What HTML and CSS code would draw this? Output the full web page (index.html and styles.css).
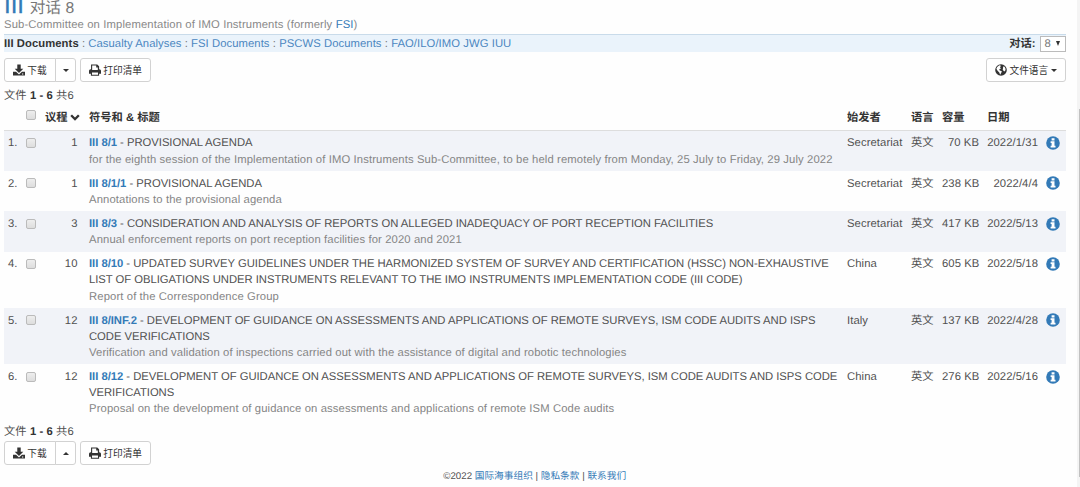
FILE: index.html
```html
<!DOCTYPE html>
<html lang="zh-CN">
<head>
  <meta charset="UTF-8" />
  <meta name="viewport" content="width=device-width, initial-scale=1" />
  <title>III 8</title>
  <link rel="stylesheet" href="styles.css">
</head>
<body>
  <svg class="symbols" width="0" height="0">
    <symbol id="download" viewBox="0 0 14 14">
      <path fill-rule="evenodd" d="M5 .5h4v5h3L7 10.4 2 5.5h3zM0 9h3.6L7 12.2 10.4 9H14v4.5H0zM10.5 11v1.2H12V11z" />
    </symbol>
    <symbol id="print" viewBox="0 0 14 14">
      <path fill-rule="evenodd" d="M2.4.5h7.2l2.2 2.2V6H12q2 0 2 2v3.5h-2.2v2.3H2.2v-2.3H0V8q0-2 2-2h.4zM3.7 1.8V7h6.6V4H8.4V1.8zM3.5 9.8v2.7h7V9.8z" />
    </symbol>
    <symbol id="globe" viewBox="0 0 14 14">
      <circle cx="7" cy="7" r="6.8" />
      <path fill="#fff" d="M2.6 3.5 5 1.6l2 .4L5.8 4l1.4 1L5 6.2l.5 1.3L8 8.6l-.8 2L6 12.4 5 9.8 3 8 1.6 5.6zM9.5 3l1.7.3 1.2 2.5-.5 2-1.2 1L9 6.8l.3-1.5z" />
    </symbol>
    <symbol id="info" viewBox="0 0 14 14">
      <circle cx="7" cy="7" r="6.8" />
      <path fill="#fff" d="M5.6 2.2h2.9v2.2H5.6zM4.6 5.3h3.9v4.5h1v1.7H4.6V9.8h1V7h-1z" />
    </symbol>
    <symbol id="chevron" viewBox="0 0 10 7">
      <path d="M.3 2 2 .5l3 3 3-3L9.7 2 5 6.7z" />
    </symbol>
  </svg>

  <div class="container">
    <h2><a href="#">III</a> <small>对话 8</small></h2>
    <p class="subtitle">Sub-Committee on Implementation of IMO Instruments (formerly <a href="#">FSI</a>)</p>

    <div class="navbar">
      <div class="links"><b>III Documents</b> : <a href="#">Casualty Analyses</a> : <a href="#">FSI Documents</a> : <a href="#">PSCWS Documents</a> : <a href="#">FAO/ILO/IMO JWG IUU</a></div>
      <div class="session"><b>对话:</b> <span class="select">8 <i class="arrow"></i></span></div>
    </div>

    <div class="toolbar">
      <div class="btn-group">
        <button class="btn"><svg><use href="#download" /></svg>下载</button>
        <button class="btn toggle"><i class="caret"></i></button>
      </div>
      <button class="btn"><svg><use href="#print" /></svg>打印清单</button>
      <button class="btn language"><svg><use href="#globe" /></svg>文件语言<i class="caret"></i></button>
    </div>

    <p class="count">文件 <b>1 - 6</b> 共6</p>

    <table>
      <colgroup>
        <col class="c-num"><col class="c-check"><col class="c-agenda"><col><col class="c-author"><col class="c-lang"><col class="c-size"><col class="c-date"><col class="c-info">
      </colgroup>
      <thead>
        <tr>
          <th></th>
          <th><span class="check"></span></th>
          <th>议程 <svg class="sort"><use href="#chevron" /></svg></th>
          <th>符号和 &amp; 标题</th>
          <th>始发者</th>
          <th>语言</th>
          <th>容量</th>
          <th>日期</th>
          <th></th>
        </tr>
      </thead>
      <tbody>
        <tr>
          <td>1.</td>
          <td><span class="check"></span></td>
          <td class="agenda">1</td>
          <td><span class="name"><a href="#">III 8/1</a> - PROVISIONAL AGENDA</span><span class="desc">for the eighth session of the Implementation of IMO Instruments Sub-Committee, to be held remotely from Monday, 25 July to Friday, 29 July 2022</span></td>
          <td>Secretariat</td>
          <td>英文</td>
          <td class="right">70 KB</td>
          <td class="right">2022/1/31</td>
          <td><svg class="info"><use href="#info" /></svg></td>
        </tr>
        <tr>
          <td>2.</td>
          <td><span class="check"></span></td>
          <td class="agenda">1</td>
          <td><span class="name"><a href="#">III 8/1/1</a> - PROVISIONAL AGENDA</span><span class="desc">Annotations to the provisional agenda</span></td>
          <td>Secretariat</td>
          <td>英文</td>
          <td class="right">238 KB</td>
          <td class="right">2022/4/4</td>
          <td><svg class="info"><use href="#info" /></svg></td>
        </tr>
        <tr>
          <td>3.</td>
          <td><span class="check"></span></td>
          <td class="agenda">3</td>
          <td><span class="name"><a href="#">III 8/3</a> - CONSIDERATION AND ANALYSIS OF REPORTS ON ALLEGED INADEQUACY OF PORT RECEPTION FACILITIES</span><span class="desc">Annual enforcement reports on port reception facilities for 2020 and 2021</span></td>
          <td>Secretariat</td>
          <td>英文</td>
          <td class="right">417 KB</td>
          <td class="right">2022/5/13</td>
          <td><svg class="info"><use href="#info" /></svg></td>
        </tr>
        <tr>
          <td>4.</td>
          <td><span class="check"></span></td>
          <td class="agenda">10</td>
          <td><span class="name"><a href="#">III 8/10</a> - UPDATED SURVEY GUIDELINES UNDER THE HARMONIZED SYSTEM OF SURVEY AND CERTIFICATION (HSSC) NON-EXHAUSTIVE<br>LIST OF OBLIGATIONS UNDER INSTRUMENTS RELEVANT TO THE IMO INSTRUMENTS IMPLEMENTATION CODE (III CODE)</span><span class="desc">Report of the Correspondence Group</span></td>
          <td>China</td>
          <td>英文</td>
          <td class="right">605 KB</td>
          <td class="right">2022/5/18</td>
          <td><svg class="info"><use href="#info" /></svg></td>
        </tr>
        <tr>
          <td>5.</td>
          <td><span class="check"></span></td>
          <td class="agenda">12</td>
          <td><span class="name"><a href="#">III 8/INF.2</a> - DEVELOPMENT OF GUIDANCE ON ASSESSMENTS AND APPLICATIONS OF REMOTE SURVEYS, ISM CODE AUDITS AND ISPS<br>CODE VERIFICATIONS</span><span class="desc">Verification and validation of inspections carried out with the assistance of digital and robotic technologies</span></td>
          <td>Italy</td>
          <td>英文</td>
          <td class="right">137 KB</td>
          <td class="right">2022/4/28</td>
          <td><svg class="info"><use href="#info" /></svg></td>
        </tr>
        <tr>
          <td>6.</td>
          <td><span class="check"></span></td>
          <td class="agenda">12</td>
          <td><span class="name"><a href="#">III 8/12</a> - DEVELOPMENT OF GUIDANCE ON ASSESSMENTS AND APPLICATIONS OF REMOTE SURVEYS, ISM CODE AUDITS AND ISPS CODE<br>VERIFICATIONS</span><span class="desc">Proposal on the development of guidance on assessments and applications of remote ISM Code audits</span></td>
          <td>China</td>
          <td>英文</td>
          <td class="right">276 KB</td>
          <td class="right">2022/5/16</td>
          <td><svg class="info"><use href="#info" /></svg></td>
        </tr>
      </tbody>
    </table>

    <p class="count bottom">文件 <b>1 - 6</b> 共6</p>
    <div class="toolbar">
      <div class="btn-group">
        <button class="btn"><svg><use href="#download" /></svg>下载</button>
        <button class="btn toggle"><i class="caret up"></i></button>
      </div>
      <button class="btn"><svg><use href="#print" /></svg>打印清单</button>
    </div>

    <div class="footer">©2022 <a href="#">国际海事组织</a> | <a href="#">隐私条款</a> | <a href="#">联系我们</a></div>
  </div>
  <div class="scrollbar"><div class="thumb"></div></div>
</body>
</html>
```
FILE: styles.css
```css
* {
  box-sizing: border-box;
}
body {
  margin: 0;
  height: 487px;
  overflow: hidden;
  background: #fefefe;
  color: #505050;
  font-family: "Liberation Sans", "Noto Sans CJK SC", sans-serif;
  font-size: 11.28px;
  line-height: 16.1px;
  text-rendering: geometricPrecision;
}
a {
  color: #337ab7;
  text-decoration: none;
}
p {
  margin: 0;
}
.symbols {
  display: none;
}
.container {
  width: 1061.5px;
  margin-left: 4px;
}
h2 {
  margin: -6px 0 0;
  height: 22px;
  font-size: 24px;
  line-height: 24px;
  font-weight: normal;
}
h2 a {
  -webkit-text-stroke: 0.3px #337ab7;
}
h2 small {
  margin-left: -1px;
  font-size: 15.7px;
  color: #777;
}
.subtitle {
  height: 18px;
  padding-top: 1px;
  color: #888;
  letter-spacing: 0.13px;
}
.navbar {
  display: flex;
  justify-content: space-between;
  align-items: center;
  height: 17.5px;
  padding-top: 1px;
  border-top: 1px solid #c9dbea;
  background: #eaf3fb;
  color: #777;
}
.navbar b {
  color: #333;
}
.links {
  letter-spacing: 0.065px;
}
.links a {
  color: #4a86c0;
}
.session {
  display: flex;
  align-items: center;
  gap: 4px;
}
.select {
  display: flex;
  align-items: center;
  gap: 5px;
  width: 26px;
  height: 16px;
  padding-left: 4px;
  border: 1px solid #bbb;
  background: #fff;
}
.arrow {
  border: 2.5px solid transparent;
  border-top: 5px solid #333;
  border-bottom: 0;
}
.toolbar {
  display: flex;
  gap: 4px;
  margin-top: 6.5px;
}
.btn-group {
  display: flex;
}
.btn {
  display: flex;
  align-items: center;
  gap: 2.5px;
  height: 24px;
  padding: 0 7.8px;
  border: 1px solid #d2d2d2;
  border-radius: 3px;
  background: #fff;
  color: #333;
  font-family: inherit;
  font-size: 9.7px;
  line-height: 15px;
}
.btn svg {
  width: 12px;
  height: 12px;
  fill: #333;
}
.btn-group .btn:first-child {
  width: 52px;
  border-radius: 3px 0 0 3px;
}
.btn-group .toggle {
  width: 21px;
  margin-left: -1px;
  padding: 0 6.5px;
  border-radius: 0 3px 3px 0;
}
.language {
  margin-left: auto;
}
.caret {
  border: 3px solid transparent;
  border-top: 3.5px solid #333;
  border-bottom: 0;
}
.caret.up {
  border-top: 0;
  border-bottom: 3.5px solid #333;
}
.count {
  margin-top: 6px;
  letter-spacing: 0.08px;
}
.count b {
  color: #333;
}
table {
  width: 100%;
  margin-top: 1px;
  border-collapse: collapse;
  table-layout: fixed;
}
th,
td {
  height: 40.2px;
  padding: 4px;
  text-align: left;
  vertical-align: top;
  white-space: nowrap;
}
td {
  padding-top: 4.6px;
  padding-bottom: 3.5px;
  letter-spacing: 0.08px;
}
th {
  height: 25.3px;
  padding-top: 5px;
  padding-bottom: 3px;
  border-bottom: 1.5px solid #ddd;
  color: #333;
}
tbody tr:nth-child(odd) {
  background: #f1f3f8;
}
.c-num { width: 18px; }
.c-check { width: 19px; }
.c-agenda { width: 44px; }
.c-author { width: 64px; }
.c-lang { width: 31px; }
.c-size { width: 45px; }
.c-date { width: 59px; }
.c-info { width: 23.5px; }
.right {
  text-align: right;
}
.agenda {
  padding-right: 7.5px;
  text-align: right;
}
.check {
  display: block;
  width: 10px;
  height: 10px;
  margin-top: 2.5px;
  border: 1px solid #bbb;
  border-radius: 2px;
  background: linear-gradient(#eee, #ddd);
}
th .check {
  margin-top: 0;
}
.sort {
  width: 10px;
  height: 7px;
  margin-left: -1px;
  fill: #333;
}
.name,
.desc {
  display: block;
}
.name {
  letter-spacing: -0.025px;
}
.name a {
  font-weight: bold;
}
.desc {
  color: #858585;
  letter-spacing: 0.115px;
}
.info {
  display: block;
  width: 14px;
  height: 14px;
  margin-top: 0.5px;
  fill: #337ab7;
}
.count.bottom {
  margin-top: 3px;
}
.bottom + .toolbar {
  margin-top: 1.5px;
}
.footer {
  margin-top: 4px;
  text-align: center;
  font-size: 9.7px;
}
.scrollbar {
  position: fixed;
  top: 0;
  right: 0;
  width: 3px;
  height: 487px;
  padding: 109px 0 0 2px;
  background: #f4f4f4;
}
.thumb {
  height: 368px;
  background: #c1c1c1;
}
```
